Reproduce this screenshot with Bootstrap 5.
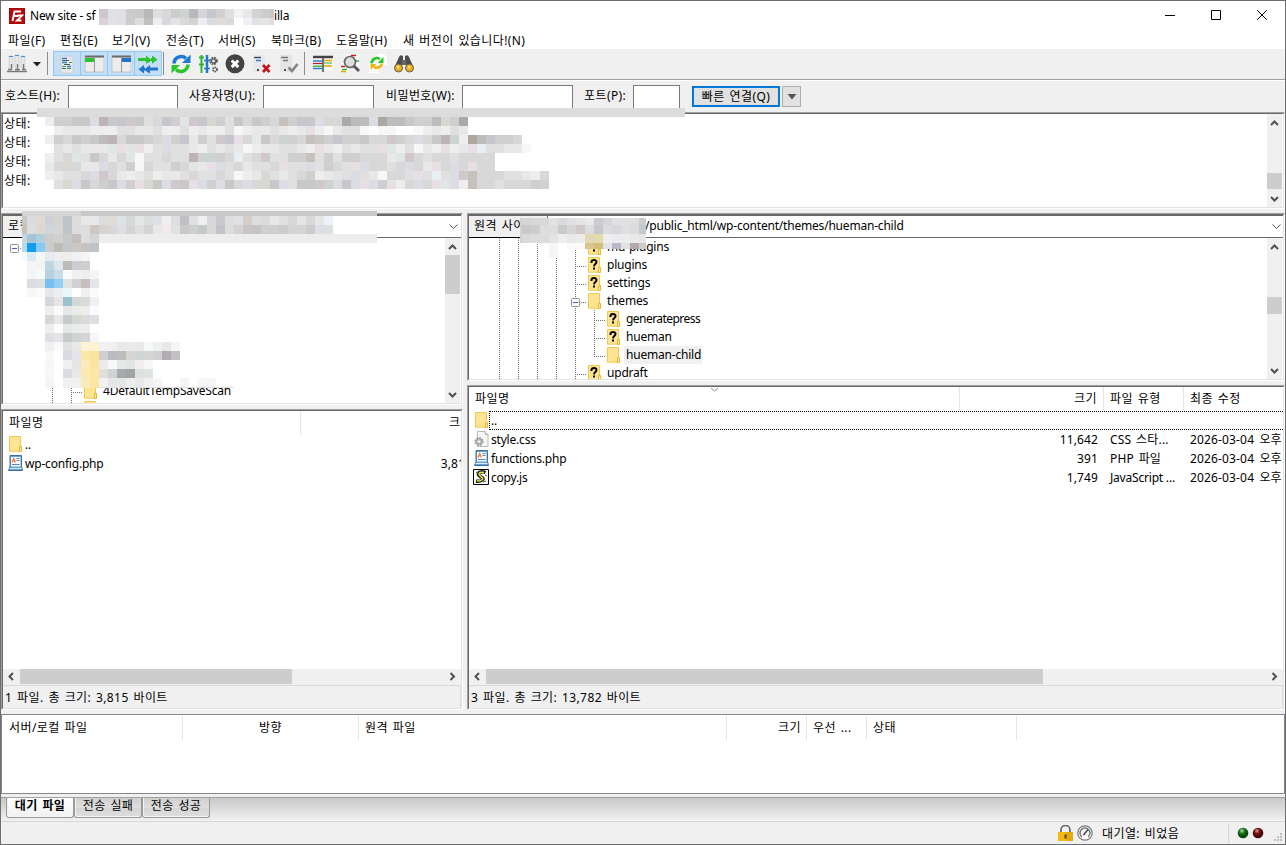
<!DOCTYPE html>
<html lang="ko">
<head>
<meta charset="utf-8">
<title>FileZilla</title>
<link rel="stylesheet" href="https://cdn.jsdelivr.net/npm/bootstrap@5.3.0/dist/css/bootstrap.min.css">
<style>
html,body{height:100%;overflow:hidden}
body{font:12px/18px "Noto Sans","Noto Sans CJK KR",sans-serif;color:#000;background:#f0f0f0;letter-spacing:.4px;word-spacing:1.3px}
.win{width:1286px;height:845px;border:1px solid #6f6d70;background:#f0f0f0;white-space:nowrap}
.lat{letter-spacing:-.2px;word-spacing:0}
svg{display:block;flex:none}
.titlebar{height:29px;background:#fff;padding-left:8px}
.titlebar .cap{margin-left:5px;width:59px}
.winbtn{width:46px}
.menus{display:grid;grid-template-columns:52px 52px 54px 52px 53px 65px 67px 140px;height:19px;background:#fff;padding-left:7px;line-height:21px}
.tools{height:32px;border-bottom:1px solid #fff;box-shadow:inset 0 -1px #a0a0a0;position:relative}
.tools .vr1{width:1px;height:23px;background:#8c8c8c;margin-top:3px}
.tgl{width:27px;height:25px;background:#c3def5;border:1px solid #90c8f6;margin-top:2px}
.tgl+.tgl{border-left-width:0}
.tool{width:20px;margin-top:5px}
.tgl .tool{margin:2px auto 0 3px}
.quick{display:grid;grid-template-columns:63px 110px 85px 111px 88px 111px 60px 47px 12px 88px 2px 19px;height:31px;padding-left:4px;line-height:27px}
.quick label{padding:1px 0 0 0}
.field{border:1px solid #7a7a7a;background:#fff;height:24px;margin-top:4px}
.quick .go{height:21px;margin-top:5px;border:2px solid #0078d7;background:#e1e1e1;line-height:17px;text-align:center}
.quick .drop{height:21px;margin-top:5px;border:1px solid #adadad;background:#e1e1e1}
.sunk{border:1px solid;border-color:#a0a0a0 #fff #fff #a0a0a0}
.well{height:100%;border:1px solid;border-color:#696969 #e3e3e3 #e3e3e3 #696969;background:#fff;overflow:hidden}
.logbox{height:97px}
.log-lines{line-height:19px;padding-left:1px}
.vsb{width:15px;background:#f0f0f0;margin-right:1px;flex:none}
.hsb{height:15px;background:#f0f0f0}
.thumb{background:#cdcdcd}
.panes{height:497px;margin-top:4px}
.pane-l{width:462px}
.pane-r{width:818px}
.addr{height:23px;border-top:1px solid #696969;border-bottom:1px solid #696969}
.addr .lbl{background:#f0f0f0;box-shadow:0 1px #000;height:21px;line-height:19px;padding-left:5px}
.tree{overflow:hidden;min-width:0}
.trow{height:18px;line-height:17px}
.trow .nm{margin-left:4px;padding:0 1px 0 2px}
.sel{background:#f0f0f0}
.tight{letter-spacing:-.55px}
.hdr{height:24px;line-height:24px}
.hdr>div{border-right:1px solid #e5e5e5;flex:none}
.lrow{height:19px;line-height:20px}
.lrow>span{flex:none}
.lrow svg{margin:1px 2px 0 5px}
.focusbox{position:relative}
.focusbox svg.dots{position:absolute;left:20px;top:0;margin:0}
.n1{width:491px}.n2{width:144px;text-align:right;padding-right:6px}.n3{width:80px;padding-left:6px}.n4{padding-left:6px;border:0!important}
.lrow .n2{letter-spacing:.1px}
.lrow .n4{letter-spacing:.15px;word-spacing:2px}
.m1{width:298px}.m2{width:171px;text-align:right;border:0!important}
.sum{height:23px;border-top:1px solid #dadada;line-height:24px;padding-left:2px;background:#f0f0f0;box-shadow:inset -1px 0 #dcdcdc}
.queue{height:80px;margin-top:4px;border:1px solid #828790;background:#fff}
.queue .hdr{margin-top:1px;line-height:23px}
.tabs-bar{height:24px;margin-top:3px;border-top:1px solid #a0a0a0;background:linear-gradient(#c8c8c8,#f2f2f2);padding-left:5px}
.tabx{height:20px;width:68px;border:1px solid #9a9a9a;border-top:0;border-radius:0 0 3px 3px;background:linear-gradient(#d0d0d0,#dedede 50%,#d4d4d4 51%,#dedede);text-align:center;line-height:16px;box-shadow:inset 1px -1px #f4f4f4}
.tabx.on{background:linear-gradient(#fff,#f1f1f1);font-weight:600}
.statusbar{height:23px;border-top:1px solid #d7d7d7}
.over{position:absolute;pointer-events:none}
</style>
<script src="https://cdn.jsdelivr.net/npm/bootstrap@5.3.0/dist/js/bootstrap.bundle.min.js"></script>
</head>
<body>
<svg width="0" height="0" class="position-absolute">
<defs>
<symbol id="fold" viewBox="0 0 13 16"><path d="M.5.5h11v14.700H.5z" fill="#ffe593" stroke="#eec84e"/><path d="M10.500 10.500h2v5h-2z" fill="#ffe9a0" stroke="#e3b935"/></symbol>
<symbol id="foldq" viewBox="0 0 13 16"><use href="#fold"/><path d="M3.500 6V4.500Q3.800 3 6 3t2.500 1.700Q8.500 6 7.300 7T6 9.300" fill="none" stroke="#000" stroke-width="2"/><path d="M5 10.500h2v2H5z"/></symbol>
<symbol id="gl" viewBox="0 0 19 18"><path d="M9.500 0v18" stroke="#707070" stroke-dasharray="1 1"/></symbol>
<symbol id="gt" viewBox="0 0 22 18"><path d="M9.500 0v18M11 10.500h10" stroke="#707070" stroke-dasharray="1 1"/></symbol>
<symbol id="ge" viewBox="0 0 22 18"><path d="M9.500 0v11M11 10.500h10" stroke="#707070" stroke-dasharray="1 1"/></symbol>
<symbol id="gb" viewBox="0 0 22 18"><use href="#gt" width="22" height="18"/><rect x="5.500" y="6.500" width="8" height="8" rx="1" fill="#f8f8f8" stroke="#919191"/><path d="M7 10.500h5" stroke="#4b63a7"/></symbol>
<symbol id="up" viewBox="0 0 15 16"><path d="M4 11 7.500 7.500 11 11" fill="none" stroke="#505050" stroke-width="2"/></symbol>
<symbol id="dn" viewBox="0 0 15 16"><path d="M4 6 7.500 9.500 11 6" fill="none" stroke="#505050" stroke-width="2"/></symbol>
<symbol id="lf" viewBox="0 0 17 15"><path d="M10 4 6.500 7.500 10 11" fill="none" stroke="#505050" stroke-width="2"/></symbol>
<symbol id="rt" viewBox="0 0 17 15"><path d="M6.500 4 10 7.500 6.500 11" fill="none" stroke="#505050" stroke-width="2"/></symbol>
<symbol id="cb" viewBox="0 0 9 6"><path d="M.5.5l4 4 4-4" fill="none" stroke="#555"/></symbol>
<symbol id="php" viewBox="0 0 15 16"><path d="M2 .5h11.500v11l1 4H.5l1.500-4z" fill="#6ba2d2" stroke="#3d6f9f"/><path d="M3 2h9.500v9.500H3z" fill="#f3f8fd"/><path d="M4 7.500l1.700-4 1.700 4M4.700 6h2" fill="none" stroke="#ee7d33" stroke-width="1.200"/><path d="M8.500 3.500h3M8.500 5.500h3M4 9.500h7.500" stroke="#5c86c6"/><path d="M1.500 13.500h12" stroke="#d8eafa"/></symbol>
<symbol id="css" viewBox="0 0 15 16"><path d="M3.500.5h7.500l3 3v12H3.500z" fill="#f7f7f7" stroke="#b9b9b9"/><path d="M11 .5v3h3" fill="#ddd" stroke="#b9b9b9"/><circle cx="5" cy="10.500" r="3.600" fill="#c9cdd1" stroke="#9a9fa4" stroke-width="2" stroke-dasharray="1.700 1.100"/><circle cx="5" cy="10.500" r="2.800" fill="#c5c9cc" stroke="#9a9fa4"/><circle cx="5" cy="10.500" r="1" fill="#fff"/></symbol>
<symbol id="js" viewBox="0 0 16 16"><path d="M.5.5h15v15H.5z" fill="#fff" stroke="#000"/><path d="M12.500 3.500C8 1.500 3.500 4 6 6.500S11.500 9 9.500 10.700 5 12.500 3 12" fill="none" stroke="#222" stroke-width="3.400"/><path d="M11 3.500C7.500 2.500 5 4 6.500 6.200S11 9 9 10.700 6 12 4 11.700" fill="none" stroke="#e8df32" stroke-width="1.500"/><path d="M3 3l2 1M10 13l3-1M12 6l2 1" stroke="#555"/></symbol>
</defs></svg>

<div class="win position-relative d-flex flex-column">
  <div class="titlebar d-flex align-items-center lat">
    <svg width="16" height="16" viewBox="0 0 16 16"><path d="M0 0h16v16H0z" fill="#b30b0b"/><path d="M0 0h16v16H0z" fill="none" stroke="#7d0000" stroke-dasharray="1 1"/><path d="M3.500 13 5.500 3.500H12M4.500 8h4.500M8.500 7.500H13l-5 5h4.500" fill="none" stroke="#fff" stroke-width="1.900"/></svg>
    <div class="cap">New site - sf</div>
    <div style="width:185px"></div><div>illa</div>
    <div class="ms-auto d-flex me-0">
      <div class="winbtn"><svg class="mx-auto" width="10" height="11"><path d="M0 5.500h10" stroke="#000"/></svg></div>
      <div class="winbtn"><svg class="mx-auto" width="10" height="11"><path d="M.5.5h9v9h-9z" fill="none" stroke="#000"/></svg></div>
      <div class="winbtn"><svg class="mx-auto" width="10" height="11"><path d="M.2.200l9.600 9.600m0-9.600L.2 9.800" fill="none" stroke="#000"/></svg></div>
    </div>
  </div>
  <div class="menus"><span>파일(F)</span><span>편집(E)</span><span>보기(V)</span><span>전송(T)</span><span>서버(S)</span><span>북마크(B)</span><span>도움말(H)</span><span>새 버전이 있습니다!(N)</span></div>

  <div class="tools d-flex">
    <svg class="tool" style="margin-left:6px" width="20" height="20" viewBox="0 0 20 20"><path d="M2 2h4v12H2zM8 1h4v12H8zM14 2h4v12h-4z" fill="#e4e5e6" stroke="#c5c7c9" stroke-width=".6"/><path d="M2 2.500h4M8 1.500h4M14 2.500h4" stroke="#4c8ed4"/><path d="M4.500 10v5M10.500 10v7M16.500 10v5M0 17.500h20M1 15.500h4M8 15.500h5M15 15.500h4" stroke="#77797b" stroke-width="1.300"/></svg>
    <svg width="8" height="20" viewBox="0 0 8 20" style="margin:4px 0 0 6px"><path d="M0 9h8l-4 4.500z" fill="#222"/></svg>
    <div class="vr1" style="margin-left:6px"></div>
    <div class="d-flex" style="margin-left:5px">
      <div class="tgl" style="width:28px"><svg class="tool" width="20" height="21" viewBox="0 0 20 21"><path d="M4 2h9l3 3v14H4z" fill="#e9eaeb" stroke="#c5c6c7" stroke-width=".7"/><path d="M13 2v3h3" fill="#fff" stroke="#bbb" stroke-width=".7"/><path d="M5 4.500h5M5 8.500h5M10 12.500h4" stroke="#2c7bd0" stroke-width="1.300"/><path d="M5 6.500h7M7 10.500h6M5 14.500h4" stroke="#555" stroke-width="1.200"/><path d="M12 8.500h3M5 12.500h4M10 14.500h4" stroke="#3aa535" stroke-width="1.200"/></svg></div>
      <div class="tgl"><svg class="tool" width="20" height="21" viewBox="0 0 20 21"><path d="M1 3h19v15H1z" fill="#ececec" stroke="#b8b8b8" stroke-width=".7"/><path d="M1 2.500h19" stroke="#6c6c6c" stroke-width="2"/><path d="M1 4h9v4H1z" fill="#2cc32c"/><path d="M10.500 4v14" stroke="#999"/></svg></div>
      <div class="tgl"><svg class="tool" width="20" height="21" viewBox="0 0 20 21"><path d="M1 3h19v15H1z" fill="#ececec" stroke="#b8b8b8" stroke-width=".7"/><path d="M1 2.500h19" stroke="#6c6c6c" stroke-width="2"/><path d="M11 4h9v4h-9z" fill="#1f74cd"/><path d="M10.500 4v14" stroke="#999"/></svg></div>
      <div class="tgl"><svg class="tool" width="20" height="21" viewBox="0 0 20 21"><path d="M0 4h8V1.500L13 5.500V4h1V1.500l5.500 4-5.500 4.200V7h-1l-5 2.700V7H0z" fill="#2cc32c"/><path d="M20 13.500h-8V11L7 15v-1.500H6V11L.5 15.200 6 19.500v-3h1l5 3v-3h8z" fill="#1f74cd"/></svg></div>
    </div>
    <div class="vr1" style="margin-left:1px"></div>
    <svg class="tool" style="margin-left:7px" width="20" height="20" viewBox="0 0 20 20"><path d="M3 9.500A7.300 7.300 0 0 1 15 4.300" fill="none" stroke="#1f78d1" stroke-width="3.600"/><path d="M19.500.5V9H11z" fill="#1f78d1"/><path d="M17 10.500A7.300 7.300 0 0 1 5 15.700" fill="none" stroke="#2cc32c" stroke-width="3.600"/><path d="M.5 19.500V11H9z" fill="#2cc32c"/></svg>
    <svg class="tool" style="margin-left:8px" width="20" height="20" viewBox="0 0 20 20"><path d="M2.500 1v18M0 3.500h5M0 10.500h5" stroke="#2cb52c" stroke-width="2"/><path d="M8 1v18" stroke="#1f78d1" stroke-width="2.500"/><path d="M5 6.500h6M5 14.500h6" stroke="#1f78d1" stroke-width="1.500"/><g fill="none" stroke="#555"><circle cx="14.500" cy="7" r="3" stroke-width="2.500" stroke-dasharray="1.500 .9"/><circle cx="14.500" cy="7" r="2" stroke-width="1.200"/><circle cx="16" cy="15.500" r="2" stroke-width="1.800" stroke-dasharray="1.400 .6"/></g></svg>
    <svg class="tool" style="margin-left:6px" width="20" height="20" viewBox="0 0 20 20"><circle cx="10" cy="9.800" r="9.500" fill="#424344"/><path d="M6.700 6.500l6.600 6.600m0-6.600l-6.600 6.600" stroke="#fff" stroke-width="3"/></svg>
    <svg class="tool" style="margin-left:7px" width="20" height="20" viewBox="0 0 20 20"><path d="M1 1h12v17H1z" fill="#e7e7e7"/><path d="M2 3.500h7M4 6.500h5" stroke="#2c7bd0" stroke-width="1.500"/><path d="M2 3.500h7" stroke="#444"/><path d="M5 15h2v2H5z" fill="#444"/><path d="M11 11l6.500 7m0-7L11 18" stroke="#c4161c" stroke-width="2.600"/></svg>
    <svg class="tool" style="margin-left:7px" width="20" height="20" viewBox="0 0 20 20"><path d="M1 1h12v17H1z" fill="#e4e4e4"/><path d="M2 3.500h7M4 6.500h5" stroke="#777" stroke-width="1.300"/><path d="M5 15h2v2H5z" fill="#555"/><path d="M9.500 13.500 13 17l5.500-7" fill="none" stroke="#858687" stroke-width="2.600"/></svg>
    <div class="vr1" style="margin-left:5px"></div>
    <svg class="tool" style="margin-left:8px" width="20" height="20" viewBox="0 0 20 20"><path d="M0 2h20v14H0z" fill="#f8f8f8"/><path d="M0 3h20" stroke="#444" stroke-width="2.500"/><path d="M0 7h9M0 14.500h9" stroke="#2c7bd0" stroke-width="1.500"/><path d="M0 9.500h9" stroke="#c4161c" stroke-width="1.300"/><path d="M0 12.200h9" stroke="#2cb52c" stroke-width="1.300"/><path d="M11 6.500h8M11 12h8" stroke="#e7a700" stroke-width="1.300"/><path d="M11 9h8" stroke="#2cb52c"/><path d="M10 3v15" stroke="#444" stroke-width="1.500"/></svg>
    <svg class="tool" style="margin-left:8px" width="20" height="20" viewBox="0 0 20 20"><path d="M5 0h13v13H5zM0 9h8v9H0z" fill="#fff"/><path d="M10 1.500h5M0 12.500h4" stroke="#c4161c" stroke-width="1.500"/><path d="M15 7h3M1 15.500h5" stroke="#2cb52c" stroke-width="1.500"/><path d="M0 17.500h5" stroke="#e7a700" stroke-width="1.500"/><circle cx="9" cy="8" r="5.500" fill="#dedfe0" stroke="#666" stroke-width="1.700"/><path d="M13 12l5 5" stroke="#555" stroke-width="2.800"/></svg>
    <svg class="tool" style="margin-left:7px" width="20" height="20" viewBox="0 0 20 20"><path d="M9 0h7l3 3v8H9zM1 9h10v10H1z" fill="#fff"/><path d="M3.500 9.500A5.500 5.500 0 0 1 12 5" fill="none" stroke="#2cc32c" stroke-width="2.600"/><path d="M15.500 3v6h-6z" fill="#2cc32c"/><path d="M14 9.500A5.500 5.500 0 0 1 6 13" fill="none" stroke="#f1b311" stroke-width="2.600"/><path d="M2.500 16v-6h6z" fill="#f1b311"/></svg>
    <svg class="tool" style="margin-left:6px" width="20" height="20" viewBox="0 0 20 20"><path d="M5 3q1-3 4-1v8l-4 3-4-1zM15 3q-1-3-4-1v8l4 3 4-1z" fill="#4c4d4f"/><path d="M8 6h4v5H8z" fill="#666"/><circle cx="4.500" cy="14" r="4" fill="#efac12" stroke="#5d5e60"/><circle cx="15.500" cy="14" r="4" fill="#efac12" stroke="#5d5e60"/><circle cx="4" cy="13" r="1.500" fill="#ffdf82"/><circle cx="15" cy="13" r="1.500" fill="#ffdf82"/></svg>
  </div>

  <div class="quick">
    <label>호스트(H):</label><div class="field"></div>
    <label style="padding-left:11px">사용자명(U):</label><div class="field"></div>
    <label style="padding-left:12px">비밀번호(W):</label><div class="field"></div>
    <label style="padding-left:11px">포트(P):</label><div class="field"></div>
    <span></span><div class="go">빠른 연결(Q)</div><span></span>
    <div class="drop d-flex align-items-center justify-content-center"><svg width="10" height="6"><path d="M.5 0h9L5 5.500z" fill="#555"/></svg></div>
  </div>

  <div class="sunk logbox"><div class="well d-flex">
    <div class="log-lines flex-grow-1"><div>상태:</div><div>상태:</div><div>상태:</div><div>상태:</div></div>
    <div class="vsb d-flex flex-column"><svg width="15" height="16"><use href="#up"/></svg><div class="thumb" style="height:16px;margin-top:43px"></div><svg class="mt-auto" width="15" height="16"><use href="#dn"/></svg></div>
  </div></div>

  <div class="panes d-flex justify-content-between">
    <div class="pane-l d-flex flex-column">
      <div class="sunk" style="height:192px"><div class="well d-flex flex-column">
        <div class="addr d-flex"><div class="lbl" style="width:77px">로컬 사이트:</div><svg class="ms-auto" style="margin:8px 3px 0 0" width="9" height="6"><use href="#cb"/></svg></div>
        <div class="d-flex flex-grow-1" style="min-height:0">
          <div class="tree flex-grow-1 lat">
            <div class="trow d-flex" style="padding-left:2px;height:144px"><svg width="22" height="18"><use href="#gb"/><path d="M0 0h22v6H0zM6 15h8v3H6z" fill="#fff"/></svg></div>
            <div class="trow d-flex" style="padding-left:40px"><svg width="19" height="18"><use href="#gl"/></svg><svg width="22" height="18"><use href="#gt"/></svg><svg width="13" height="16" style="margin-top:1px"><use href="#fold"/></svg><span class="nm">4DefaultTempSaveScan</span></div>
            <div class="trow d-flex" style="padding-left:40px"><svg width="19" height="18"><use href="#gl"/></svg><svg width="22" height="18"><use href="#gt"/></svg><svg width="13" height="16" style="margin-top:1px"><use href="#fold"/></svg></div>
          </div>
          <div class="vsb d-flex flex-column"><svg width="15" height="17"><use href="#up" height="16"/></svg><div class="thumb" style="height:39px"></div><svg class="mt-auto" width="15" height="16"><use href="#dn"/></svg></div>
        </div>
      </div></div>
      <div class="sunk" style="height:301px;margin-top:4px"><div class="well d-flex flex-column">
        <div class="hdr d-flex"><div class="m1" style="padding-left:6px">파일명</div><div class="m2">크기</div></div>
        <div class="lrow d-flex lat"><svg width="13" height="16" style="margin-left:6px;margin-right:3px"><use href="#fold"/></svg><span>..</span></div>
        <div class="lrow d-flex lat"><svg width="15" height="16"><use href="#php"/></svg><span style="width:276px">wp-config.php</span><span class="m2" style="letter-spacing:.1px">3,815</span></div>
        <div class="hsb d-flex mt-auto"><svg width="17" height="15"><use href="#lf"/></svg><div class="thumb" style="width:272px"></div><svg class="ms-auto" width="17" height="15"><use href="#rt"/></svg></div>
        <div style="height:1px;background:#f0f0f0"></div>
        <div class="sum">1 파일. 총 크기: 3,815 바이트</div>
      </div></div>
    </div>

    <div class="pane-r d-flex flex-column">
      <div class="sunk" style="height:168px"><div class="well d-flex flex-column">
        <div class="addr d-flex"><div class="lbl" style="width:78px">원격 사이트:</div><div class="lat" style="border-left:1px solid #696969;padding-left:97px;line-height:19px">/public_html/wp-content/themes/hueman-child</div><svg class="ms-auto" style="margin:8px 2px 0 0" width="9" height="6"><use href="#cb"/></svg></div>
        <div class="d-flex flex-grow-1" style="min-height:0">
          <div class="tree flex-grow-1 lat" id="remoteTree"></div>
          <div class="vsb d-flex flex-column"><svg width="15" height="16"><use href="#up"/></svg><div class="thumb" style="height:17px;margin-top:43px"></div><svg class="mt-auto" width="15" height="16"><use href="#dn"/></svg></div>
        </div>
      </div></div>
      <div class="sunk" style="height:325px;margin-top:4px"><div class="well d-flex flex-column">
        <div class="hdr d-flex position-relative"><div class="n1" style="padding-left:6px">파일명</div><svg class="over" style="left:241px;top:1px" width="9" height="5"><path d="M1 0l3.500 3L8 0" fill="none" stroke="#888"/></svg><div class="n2">크기</div><div class="n3">파일 유형</div><div class="n4">최종 수정</div></div>
        <div class="lrow d-flex focusbox lat"><svg width="13" height="16" style="margin-left:6px;margin-right:3px"><use href="#fold"/></svg><span>..</span><svg class="dots" width="800" height="19"><path d="M.5 0v19M1 .5h799M1 18.500h799" stroke="#000" stroke-dasharray="1 1"/></svg></div>
        <div class="lrow d-flex"><svg width="15" height="16"><use href="#css"/></svg><span class="lat" style="width:469px">style.css</span><span class="n2">11,642</span><span class="n3" style="letter-spacing:.2px">CSS 스타...</span><span class="n4">2026-03-04 오후</span></div>
        <div class="lrow d-flex"><svg width="15" height="16"><use href="#php"/></svg><span class="lat" style="width:469px">functions.php</span><span class="n2">391</span><span class="n3" style="letter-spacing:.2px">PHP 파일</span><span class="n4">2026-03-04 오후</span></div>
        <div class="lrow d-flex"><svg width="16" height="16" style="margin-left:4px"><use href="#js"/></svg><span class="lat" style="width:469px">copy.js</span><span class="n2">1,749</span><span class="n3 lat">JavaScript ...</span><span class="n4">2026-03-04 오후</span></div>
        <div class="hsb d-flex mt-auto"><svg width="17" height="15"><use href="#lf"/></svg><div class="thumb" style="width:557px"></div><svg class="ms-auto" width="17" height="15"><use href="#rt"/></svg></div>
        <div style="height:1px;background:#f0f0f0"></div>
        <div class="sum">3 파일. 총 크기: 13,782 바이트</div>
      </div></div>
    </div>
  </div>

  <div class="queue"><div class="hdr d-flex"><div style="width:181px;padding-left:7px">서버/로컬 파일</div><div class="text-center" style="width:176px">방향</div><div style="width:368px;padding-left:6px">원격 파일</div><div class="text-end" style="width:80px;padding-right:5px">크기</div><div style="width:60px;padding-left:6px">우선 ...</div><div style="width:150px;padding-left:6px">상태</div></div></div>
  <div class="tabs-bar d-flex"><div class="tabx on">대기 파일</div><div class="tabx">전송 실패</div><div class="tabx">전송 성공</div></div>
  <div class="statusbar d-flex align-items-center">
    <svg style="margin-left:1057px" width="15" height="17" viewBox="0 0 15 17"><path d="M3 8V5a4.500 4.500 0 0 1 9 0v3" fill="none" stroke="#666" stroke-width="1.700"/><path d="M0 7h15v9H0z" fill="#f5b90f"/><path d="M8 7h7v9H8z" fill="#e6a80e"/><path d="M6.500 9.500h2v4h-2z" fill="#444"/></svg>
    <svg style="margin-left:4px" width="16" height="16" viewBox="0 0 16 16"><circle cx="8" cy="8" r="7.200" fill="#fff" stroke="#777" stroke-width="1.200"/><circle cx="8" cy="8" r="5" fill="#f4f4f4" stroke="#777" stroke-width="1.500"/><path d="M6.500 10 11 4.500" stroke="#444" stroke-width="1.500"/><path d="M5 11h6v3H5z" fill="#fff"/></svg>
    <div style="margin-left:9px;width:126px;padding-top:1px">대기열: 비었음</div>
    <div style="width:1px;height:19px;background:#d7d7d7"></div>
    <svg style="margin-left:8px" width="28" height="14"><defs><radialGradient id="lg" cx=".4" cy=".3"><stop stop-color="#b9dfb0"/><stop offset=".5" stop-color="#1d7a1d"/><stop offset="1" stop-color="#064a06"/></radialGradient><radialGradient id="lr" cx=".4" cy=".3"><stop stop-color="#d6a3a3"/><stop offset=".5" stop-color="#7a1717"/><stop offset="1" stop-color="#480505"/></radialGradient></defs><circle cx="6" cy="7" r="5.300" fill="url(#lg)"/><circle cx="21" cy="7" r="5.300" fill="url(#lr)"/></svg>
    <svg class="ms-auto" style="margin:9px 2px 0 0" width="9" height="9"><path d="M6 0h2v2H6zM3 3h2v2H3zM6 3h2v2H6zM0 6h2v2H0zM3 6h2v2H3zM6 6h2v2H6z" fill="#bdbdbd"/></svg>
  </div>
  <div class="over" id="veil" style="left:-1px;top:-1px"></div>
</div>

<script>
// remote directory tree: [name, icon, guide kind, depth, extra class]
const icon=(id,w,h)=>`<svg width="${w}" height="${h}"><use href="#${id}"/></svg>`;
document.getElementById('remoteTree').innerHTML=[
 ['mu-plugins','foldq','gt',4],['plugins','foldq','gt',4],['settings','foldq','gt',4],['themes','fold','gb',4],
 ['generatepress','foldq','gt',5,'tight'],['hueman','foldq','gt',5],['hueman-child','fold','ge',5,'sel'],['updraft','foldq','gt',4]
].map(([n,i,g,d,c])=>`<div class="trow d-flex" style="padding-left:21px">${icon('gl',19,18).repeat(d)}${icon(g,22,18)}<svg width="13" height="16" style="margin-top:1px"><use href="#${i}"/></svg><span class="nm ${c||''}">${n}</span></div>`).join('');

// pixelated areas: one letter per 9px cell, or explicit hex tokens
const tone={'0':'#fff','1':'#f7f7f7','2':'#eee','3':'#e8e8e8','4':'#e0e0e1','5':'#d8d8d8','6':'#cfcfcf','7':'#c8c8c9','8':'#bcbcbc','9':'#a9aaac',
 p:'#e7dfe3',q:'#d1c8cb',r:'#beb4b7',b:'#dcdde4',c:'#c7c6cf',g:'#e0e6e4',h:'#cdd3d2',t:'#dad6d1',u:'#c6c1bc',v:'#aca79f',n:'#e9eef2'};
let out='';
const cell=(x,y,w,h,c)=>{out+=`<rect x="${x}" y="${y}" width="${w}" height="${h}" fill="${c}"/>`};
const letters=(x,y,s,h=9)=>[...s].forEach((k,i)=>{if(k!='.')cell(x+i*9,y,9,h,tone[k])});
const hexes=(x,y,s,h=9)=>s.split(' ').forEach((k,i)=>{if(k!='-')cell(x+i*9,y,9,h,'#'+k)});

hexes(99,9,'cbc7ca e0e1e7 dfe0e3 cccccc c9c9c9 b9b9bb dedede d8d8d8 ccc cfd3d2 b9b9b9 d3d5d8 c4c8cd d2d0ce e0e0e0 f2f2f2 e8e8e8 d3d3d5 ccc');
cell(270,9,4,9,'#c8c8cb');
hexes(99,18,'d9d3d7 e1e2e8 e0e0e0 ccccd0 ddd bfbfbf eee d7d9df e3e3e3 d9d9d9 d3d3d3 ededf3 d8dce0 e0dcda d9dadc fff f0f0f4 e3dfe2 e4e4e7',7);
cell(270,18,4,7,'#ddd');

cell(37,108,648,9,'#dcdcdc');
letters(45,117,'26677br7cq745c6gqct6475765u6c7bt5988bv887668t69');
letters(45,126,'.2333222443342242322412334323p21344101100123243');
letters(45,135,'2657678r57765b6c364qcp5375h65u76c66755q65b57rh2'+'v8c665');
letters(45,144,'.434333gpgp24b4432434312334432p324344pg24132p23'+'pn44331');
letters(45,153,'245g47535g144544rhh65n45q4466u464665553gq545545'+'555');
letters(45,162,'35t533b546154465g3pb453445p44b4654pb5545b53p5b5'+'p55');
letters(45,171,'23445bq5323423345445412354345623g4b431554p4n4bq'+'2u55544325'.slice(1));
letters(45,180,'.4tb7567b6pt7bq7pb6b75b5t7b477qhb7bpb6pn5b5pgb2'+'u5545556h');

// local site address and tree
cell(22,211,59,5,'#d6d6d6');cell(81,211,296,5,'#c8c8c8');
cell(99,234,278,9,'#ededed');
cell(333,216,44,18,'#fff');
[[216,'#c8c8c6'],[225,'#c5c2be'],[234,'#c6d6df'],[243,'#b7d9e9'],[252,'#f5fafd']].forEach(([y,c])=>cell(22,y,5,9,c));
[
'dcdcdc dfdad4 cdd1d4 d6d4cf bec5c8 dcdcdc e8e8e8 e8e8e8 dcdcdc e0dcd8 dce3e7 d8d8d8 e4e8e6 ddd dde0e5 eee dedede c0c1c4 e0e0e0 eef0ef d8d8d8 c9c9cd ddd e0e0e0 d4cdc8 ddd dcdbd9 e8e8e8 e0e0e0 d8d8d8 e4e6e4 d8d8d8 e6e6e6 eff3f7',
'ddd dcd8d0 d1d5dc d6d6d6 bfc5c7 ddd ddd cfc7c4 d6d4d0 d8d8d8 dcdee3 d4d4d4 dedede d4d4d4 e8e8e8 f0ebe8 dfe2e4 c9c9c9 cfcfcf c6c9c9 d7d7d7 c5c1c8 dcdcdc d2d3d6 c9c5c4 c4c4c4 cfcfcf cfcfcf ccc d4d4d4 d2d6d4 ccc dcdfe5 dce0e0',
'a5c4d8 b0cede ccc cfcfcf c8c8c8 c2bfbd ddd d5d5d5',
'119df0 87caf6 ccc bdbdb5 c0c7cd cbc7c5 c8c3c0 bdc3c6',
'dceaf2 f2f8fa e6ebee efeeee f0ecea f0f0f0 f5f5f5',
'f5f5f5 f3f5f5 bfd6e2 dde7ef bdbbb8 cdccd0 cfcfd2',
'f5f5f5 f3fbfc b9d0df c9dceb fafaf8 f0f0f0 eee f4f4f4',
'dddce1 dce0e2 78c0ef 95cef2 e2e3de d1d0d4 c7bfbf e3e6e9',
'f6f6f6 fafafa e3e8eb eee e8f8fd fff f0f0f0 fbfcff',
'- - d3d7dc e6e6e6 9bc0cf d3d8d4 dcdbd9 eff0f2',
'- - eee fafafa e5e7e8 eaecea eeedeb fafbff',
'- - d3d7dc e7e7e7 c9cacd d3d8d4 dcd9d8 dfdfe1',
'- - eee fbfbfb e5e7e8 eaebea efedeb',
'- - dfdfe4 e5e5e7 c8c9cb cfd4d0 d5d5d5 f6f6f6',
'- - f0f0f0 fafafa e0e1e2 e8e8e8 fef4d5 fef2d0 f2f0f4 f0f0f0 e8eae9 ebebec e9e9e9 f6f9fa f0f0f0 e8e8e8 f6f6f6',
'- - f8f8f8 - dadbe2 e4e4e8 fbe8a6 fae49c d3cfcf babac2 bfbdbc d5d5d5 cfd5d5 d5d5d5 d0d1cf b0adb4 c3c1c3',
'- - f6f6f6 - f0f0f0 e4e4e6 faebb8 fae49e ececee f8f8f8 e4e9e8 dfe6e3 f0efee f7f7f7',
'- - f8f8f8 - dadbe2 e8e8e8 faeab2 fce7a5 e3ded9 d0d3d5 a5aaad a3a3a3 dde1e1 dfe3e2',
'- - f5f5f5 fff f0f0f0 f0f0f0 faebba fce69e f2f2f2 e5e6e8 e7e7e7 eeedee e8e8e8 f0f0f0 f6f6f6 fff fff f4f4f4 fff f7f7f7 f5f5f5 fff fff'
].forEach((s,i)=>hexes(27,216+i*9,s,i==18?10:9));
cell(99,387,135,1,'#dedede');

// remote site address
cell(520,218,2,25,'#d2d2d2');
hexes(522,218,'d5d5d6 d8d8d8 d8d8d8 e2e2e2 d8dade dfe0e4 e4e4e4 e9e9e9 cdcbcf d6d6d8 e0dfe3 dfe0e2 dde0df',7);
hexes(522,225,'c9c9c9 cdcdce ddd dedede cacac9 d4d5d6 cfcac9 ddd c9c8cb dcdcde d9d6dc dfdfe3 dcdcdc');
hexes(522,234,'d9d9d9 dcdcdc dcdcdc e4e4e4 eee e5e7e8 ececec e3d8b6 e3daae eee ebebef ececec e9e9e9');
hexes(549,243,'f6f6f6 fff fafafa fafafa d8c68a d4be78 e1e1e6 b8b9c4 dfe0e4 b4a7ad',6);
cell(549,249,9,9,'#f5f5f5');
[[218,7,'#c9cecf'],[225,9,'#c4cbcd'],[234,9,'#e6e6e6'],[243,6,'#ccc']].forEach(([y,h,c])=>cell(639,y,7,h,c));
document.getElementById('veil').innerHTML=`<svg width="700" height="400" shape-rendering="crispEdges">${out}</svg>`;
</script>
</body>
</html>
